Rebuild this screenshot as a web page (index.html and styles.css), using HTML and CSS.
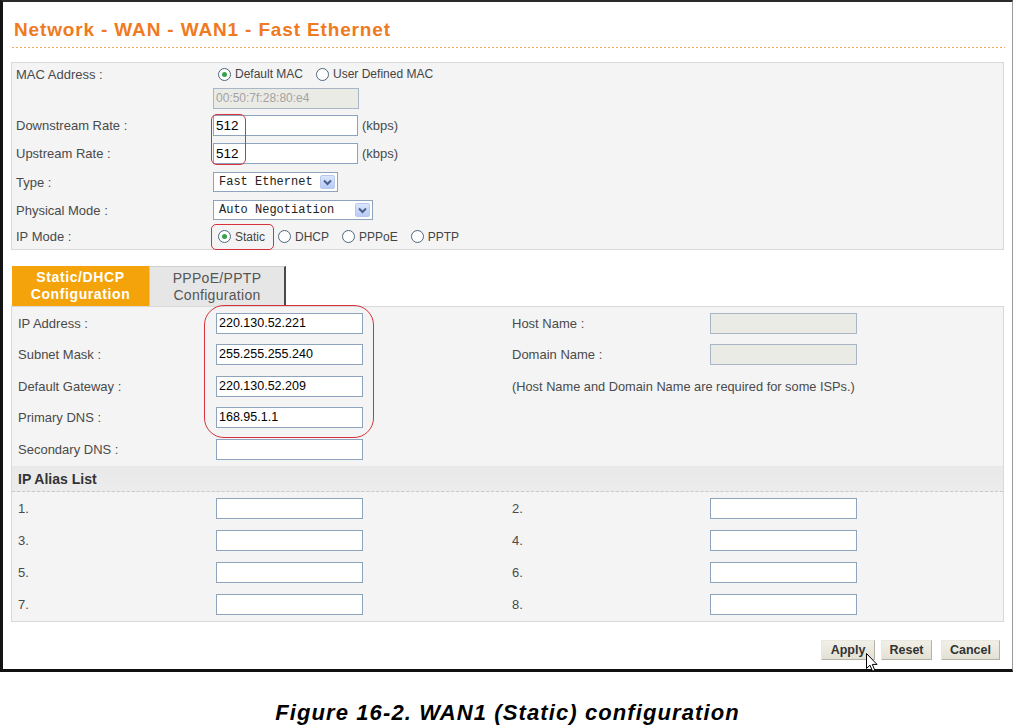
FILE: index.html
```html
<!DOCTYPE html>
<html>
<head>
<meta charset="utf-8">
<title>Network - WAN - WAN1 - Fast Ethernet</title>
<link rel="stylesheet" href="styles.css">
</head>
<body>
<div class="shot">
  <div class="window">
    <h1 class="title">Network - WAN - WAN1 - Fast Ethernet</h1>
    <div class="dots"></div>

    <div class="panel general">
      <div class="lbl">MAC Address :</div>
      <div class="val">
        <span class="radio"><span class="dot on"></span>Default MAC</span>
        <span class="radio"><span class="dot"></span>User Defined MAC</span>
      </div>
      <div class="lbl"></div>
      <div class="val"><span class="input disabled mac">00:50:7f:28:80:e4</span></div>

      <div class="lbl">Downstream Rate :</div>
      <div class="val"><span class="input rate">512</span><span class="unit">(kbps)</span></div>

      <div class="lbl">Upstream Rate :</div>
      <div class="val"><span class="input rate">512</span><span class="unit">(kbps)</span></div>

      <div class="lbl">Type :</div>
      <div class="val">
        <span class="select sel-type">Fast Ethernet<span class="drop"><svg width="9" height="7" viewBox="0 0 9 7"><path d="M1 1.5 L4.5 5 L8 1.5" fill="none" stroke="#4a5f8a" stroke-width="2"/></svg></span></span>
      </div>

      <div class="lbl">Physical Mode :</div>
      <div class="val">
        <span class="select sel-phys">Auto Negotiation<span class="drop"><svg width="9" height="7" viewBox="0 0 9 7"><path d="M1 1.5 L4.5 5 L8 1.5" fill="none" stroke="#4a5f8a" stroke-width="2"/></svg></span></span>
      </div>

      <div class="lbl">IP Mode :</div>
      <div class="val">
        <span class="radio"><span class="dot on"></span>Static</span>
        <span class="radio"><span class="dot"></span>DHCP</span>
        <span class="radio"><span class="dot"></span>PPPoE</span>
        <span class="radio"><span class="dot"></span>PPTP</span>
      </div>

      <span class="mark mark-rate"></span>
      <span class="mark mark-static"></span>
    </div>

    <div class="tabs">
      <div class="tab active">Static/DHCP<br>Configuration</div>
      <div class="tab">PPPoE/PPTP<br>Configuration</div>
    </div>

    <div class="panel conf">
      <div class="lbl">IP Address :</div>
      <div class="val"><span class="input ip">220.130.52.221</span></div>
      <div class="lbl2">Host Name :</div>
      <div class="val"><span class="input disabled ip"></span></div>

      <div class="lbl">Subnet Mask :</div>
      <div class="val"><span class="input ip">255.255.255.240</span></div>
      <div class="lbl2">Domain Name :</div>
      <div class="val"><span class="input disabled ip"></span></div>

      <div class="lbl">Default Gateway :</div>
      <div class="val"><span class="input ip">220.130.52.209</span></div>
      <div class="note">(Host Name and Domain Name are required for some ISPs.)</div>

      <div class="lbl">Primary DNS :</div>
      <div class="val"><span class="input ip">168.95.1.1</span></div>
      <div class="lbl2"></div>
      <div class="val"></div>

      <div class="lbl">Secondary DNS :</div>
      <div class="val"><span class="input ip"></span></div>
      <div class="lbl2"></div>
      <div class="val"></div>

      <div class="band">IP Alias List</div>

      <div class="lbl">1.</div>
      <div class="val"><span class="input ip"></span></div>
      <div class="lbl2">2.</div>
      <div class="val"><span class="input ip"></span></div>

      <div class="lbl">3.</div>
      <div class="val"><span class="input ip"></span></div>
      <div class="lbl2">4.</div>
      <div class="val"><span class="input ip"></span></div>

      <div class="lbl">5.</div>
      <div class="val"><span class="input ip"></span></div>
      <div class="lbl2">6.</div>
      <div class="val"><span class="input ip"></span></div>

      <div class="lbl">7.</div>
      <div class="val"><span class="input ip"></span></div>
      <div class="lbl2">8.</div>
      <div class="val"><span class="input ip"></span></div>

      <span class="mark mark-ip"></span>
    </div>

    <div class="actions">
      <span class="btn btn-apply">Apply</span>
      <span class="btn btn-reset">Reset</span>
      <span class="btn btn-cancel">Cancel</span>
      <svg class="cursor" width="13" height="20" viewBox="0 0 13 20">
        <path d="M0.5 0.5 L0.5 15.5 L4 12.2 L6.6 18.3 L8.8 17.3 L6.3 11.4 L11 11.4 Z" fill="#fff" stroke="#000" stroke-width="1" stroke-linejoin="miter"/>
      </svg>
    </div>
  </div>
  <p class="caption">Figure 16-2. WAN1 (Static) configuration</p>
</div>
</body>
</html>
```

FILE: styles.css
```css
* { box-sizing: border-box; }

html, body {
  margin: 0;
  padding: 0;
  background: #fff;
}

body {
  font-family: "Liberation Sans", Arial, sans-serif;
  font-size: 12px;
  color: #444;
}

.shot {
  width: 1015px;
}

.window {
  width: 1013px;
  height: 672px;
  border-left: 3px solid #141414;
  border-top: 2px solid #2a2a2a;
  border-bottom: 3px solid #111;
  border-right: 1px solid #9a9a9a;
  padding: 0 8px;
  background: #fff;
}

.title {
  margin: 0;
  padding: 16px 0 0 3px;
  height: 45px;
  font-family: "Liberation Sans", Arial, sans-serif;
  font-size: 19px;
  line-height: 24px;
  font-weight: bold;
  color: #ef7a1f;
  letter-spacing: 0.85px;
}

.dots {
  height: 1px;
  margin: 0 -1px 14px 1px;
  background: repeating-linear-gradient(90deg, #f0a95a 0 2px, transparent 2px 4px);
}

.panel {
  position: relative;
  background: #f4f4f4;
  border: 1px solid #d9d9d9;
}

.general {
  display: grid;
  grid-template-columns: 201px 1fr;
  grid-template-rows: 22px 26px 28px 29px 28px 28px 25px;
  height: 188px;
}

.lbl, .lbl2, .val, .note {
  display: flex;
  align-items: center;
  white-space: nowrap;
}

.lbl, .lbl2, .note, .unit {
  font-size: 13px;
  color: #4a4a4a;
}

.note {
  font-size: 12.8px;
}

.general .lbl {
  padding-left: 4px;
}

.input {
  display: inline-block;
  height: 21px;
  line-height: 19px;
  background: #fff;
  border: 1px solid #8ea4bd;
  color: #000;
  padding-left: 2px;
  font-size: 12.5px;
}

.input.disabled {
  background: #ebebe6;
  border-color: #a8b6c6;
  color: #a3a3a3;
  font-size: 12px;
}

.mac {
  width: 146px;
}

.rate {
  width: 145px;
  font-size: 13.5px;
}

.unit {
  margin-left: 4px;
}

.radio {
  display: inline-flex;
  align-items: center;
  margin-right: 13px;
  margin-left: 5px;
  color: #444;
}

.radio + .radio {
  margin-left: 0;
}

.dot {
  position: relative;
  width: 13px;
  height: 13px;
  border-radius: 50%;
  border: 1px solid #4c6680;
  background: #fff;
  margin-right: 4px;
}

.dot.on::after {
  content: "";
  position: absolute;
  left: 3px;
  top: 3px;
  width: 5px;
  height: 5px;
  border-radius: 50%;
  background: #3aa14a;
}

.select {
  position: relative;
  display: inline-flex;
  align-items: center;
  height: 20px;
  background: #fff;
  border: 1px solid #8ea4bd;
  font-family: "Liberation Mono", "Courier New", monospace;
  font-size: 12px;
  color: #222;
  padding-left: 5px;
}

.sel-type { width: 125px; }
.sel-phys { width: 160px; }

.drop {
  position: absolute;
  right: 2px;
  top: 2px;
  width: 15px;
  height: 14px;
  display: flex;
  align-items: center;
  justify-content: center;
  background: linear-gradient(#dbe6fc, #b7cbf4);
  border: 1px solid #b7c8ec;
  border-radius: 2px;
}

.mark {
  position: absolute;
  border: 1.5px solid #d5323c;
}

.mark-rate {
  left: 199px;
  top: 51px;
  width: 35px;
  height: 51px;
  border-radius: 6px;
}

.mark-static {
  left: 199px;
  top: 161px;
  width: 63px;
  height: 26px;
  border-radius: 5px;
}

.mark-ip {
  left: 192px;
  top: -2px;
  width: 170px;
  height: 133px;
  border-radius: 20px;
}

.tabs {
  display: flex;
  margin: 16px 0 0 1px;
  height: 40px;
}

.tab {
  width: 137px;
  height: 40px;
  display: flex;
  align-items: center;
  justify-content: center;
  text-align: center;
  font-size: 14px;
  line-height: 17px;
  color: #555;
  background: #e6e6e6;
  border-top: 1px solid #d0d0d0;
  border-left: 1px solid #c8c8c8;
  border-right: 2px solid #4a4a4a;
  letter-spacing: 0.3px;
}

.tab.active {
  background: #f5a30a;
  color: #fff;
  font-weight: bold;
  border: none;
  letter-spacing: 0.6px;
}

.conf {
  display: grid;
  grid-template-columns: 204px 296px 198px 1fr;
  grid-template-rows: 32px 31px 32px 31px 33px 26px 32px 32px 32px 32px;
  height: 316px;
  padding-top: 0;
}

.conf .lbl {
  padding-left: 6px;
}

.ip {
  width: 147px;
}

.note {
  grid-column: 3 / 5;
}

.band {
  grid-column: 1 / -1;
  display: flex;
  align-items: center;
  padding-left: 6px;
  font-weight: bold;
  font-size: 14px;
  color: #333;
  background: linear-gradient(#e9e9e9, #ececec);
  border-bottom: 1px dashed #c9c9c9;
}

.actions {
  position: relative;
  display: flex;
  justify-content: flex-end;
  margin-top: 18px;
  padding-right: 4px;
}

.btn {
  display: inline-flex;
  align-items: center;
  justify-content: center;
  height: 20px;
  font-weight: bold;
  font-size: 12.5px;
  color: #333;
  background: linear-gradient(#f1f0e8, #e3e1d5);
  border: 1px solid #e9e7de;
  border-right-color: #b4b1a4;
  border-bottom-color: #b4b1a4;
}

.btn-apply { width: 54px; margin-right: 6px; }
.btn-reset { width: 51px; margin-right: 9px; }
.btn-cancel { width: 59px; }

.cursor {
  position: absolute;
  left: 855px;
  top: 13px;
}

.caption {
  margin: 29px 0 0;
  text-align: center;
  font-family: "Liberation Sans", Arial, sans-serif;
  font-weight: bold;
  font-style: italic;
  font-size: 22px;
  line-height: 24px;
  letter-spacing: 1.1px;
  color: #000;
}
```
